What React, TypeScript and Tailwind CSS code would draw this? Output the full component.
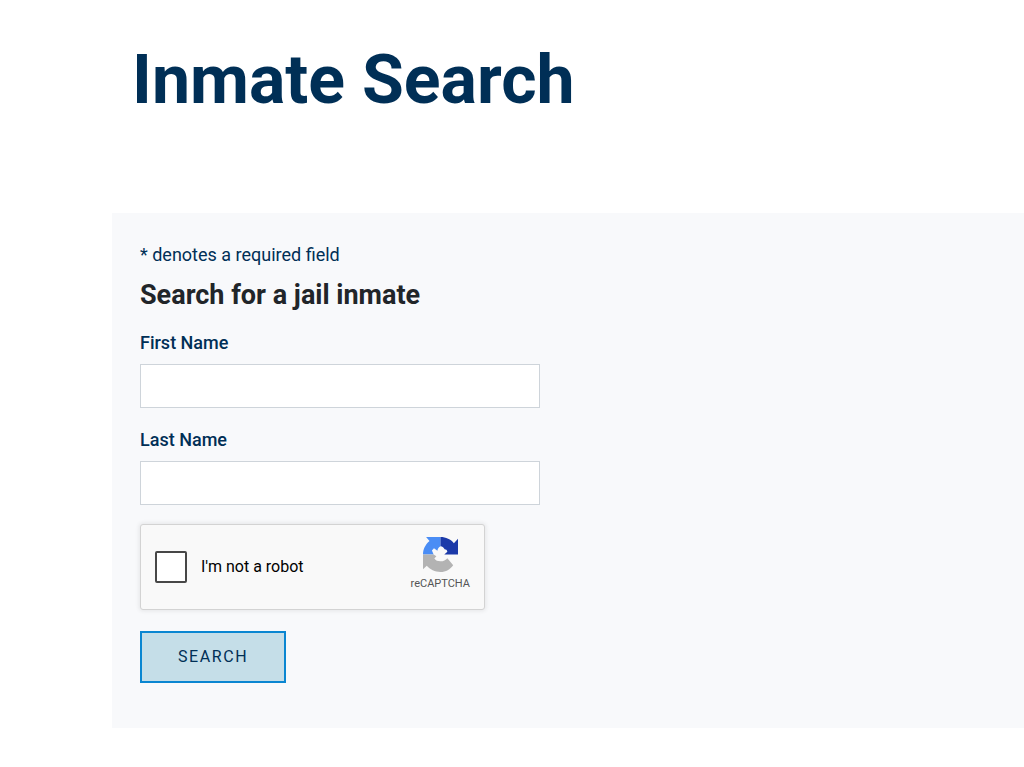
import React, { useState } from 'react';

interface TextFieldProps {
  id: string;
  label: string;
  value: string;
  onChange: (value: string) => void;
}

export default function App() {
  const [firstName, setFirstName] = useState('');
  const [lastName, setLastName] = useState('');

  return (
    <main className="bg-white pb-10 pl-28 font-['Roboto','Liberation_Sans',sans-serif] text-[#002f56]">
      <h1 className="pt-10 pl-5 text-[68px] leading-[80px] font-bold">Inmate Search</h1>

      <section className="mt-[93px] bg-[#f8f9fb] px-7 pt-7 pb-[45px]">
        <form onSubmit={(e) => e.preventDefault()}>
          <p className="text-lg leading-7">* denotes a required field</p>
          <h2 className="mt-2 text-[27px] leading-9 font-bold text-[#212529]">Search for a jail inmate</h2>

          <div className="mt-[18px] flex max-w-[400px] flex-col gap-5">
            <TextField id="first-name" label="First Name" value={firstName} onChange={setFirstName} />
            <TextField id="last-name" label="Last Name" value={lastName} onChange={setLastName} />
          </div>

          <Recaptcha />

          <button
            type="submit"
            className="mt-[21px] h-[52px] border-2 border-[#0a86d1] bg-[#c5dee8] px-9 text-base tracking-widest"
          >
            SEARCH
          </button>
        </form>
      </section>
    </main>
  );
}

function TextField({ id, label, value, onChange }: TextFieldProps) {
  return (
    <div className="flex flex-col gap-[9px]">
      <label htmlFor={id} className="text-lg leading-6 font-medium">{label}</label>
      <input
        id={id}
        type="text"
        value={value}
        onChange={(e) => onChange(e.target.value)}
        className="h-11 w-full border border-[#ced4da] bg-white px-3 text-lg outline-none"
      />
    </div>
  );
}

function Recaptcha() {
  return (
    <div className="mt-[19px] flex h-[86px] max-w-[345px] items-center rounded-[3px] border border-[#d3d3d3] bg-[#f9f9f9] px-3.5 shadow-[0_0_4px_1px_rgba(0,0,0,0.08)]">
      <input
        id="not-a-robot"
        type="checkbox"
        className="size-8 shrink-0 appearance-none rounded-xs border-2 border-[#474747] bg-white checked:bg-[#4a90e2]"
      />
      <label htmlFor="not-a-robot" className="ml-3.5 grow text-base text-black">I'm not a robot</label>
      <div className="flex flex-col items-center pb-1.5">
        <RecaptchaLogo />
        <span className="mt-1 text-[11px] leading-4 text-[#555]">reCAPTCHA</span>
      </div>
    </div>
  );
}

function RecaptchaLogo() {
  return (
    <svg viewBox="0 0 102 102" className="size-[35px]" aria-hidden="true">
      <path
        fill="#4a8df5"
        d="M51 0H9l10 12C7 22 0 36 0 51h31l-5-12 6-6 10 7c1-6 4-11 9-13z"
      />
      <path
        fill="#1c3aa9"
        d="M51 0c16 0 30 7 39 18l12-13v46H62l9-8c-1-5-4-7-8-7-2-5-6-9-12-9z"
      />
      <path
        fill="#b3b3b3"
        d="M0 51h31l8 5-6 7c4 6 10 8 18 8 9 0 15-3 20-9l17 20c-9 12-21 20-37 20-16 0-31-7-40-18L0 94z"
      />
    </svg>
  );
}
